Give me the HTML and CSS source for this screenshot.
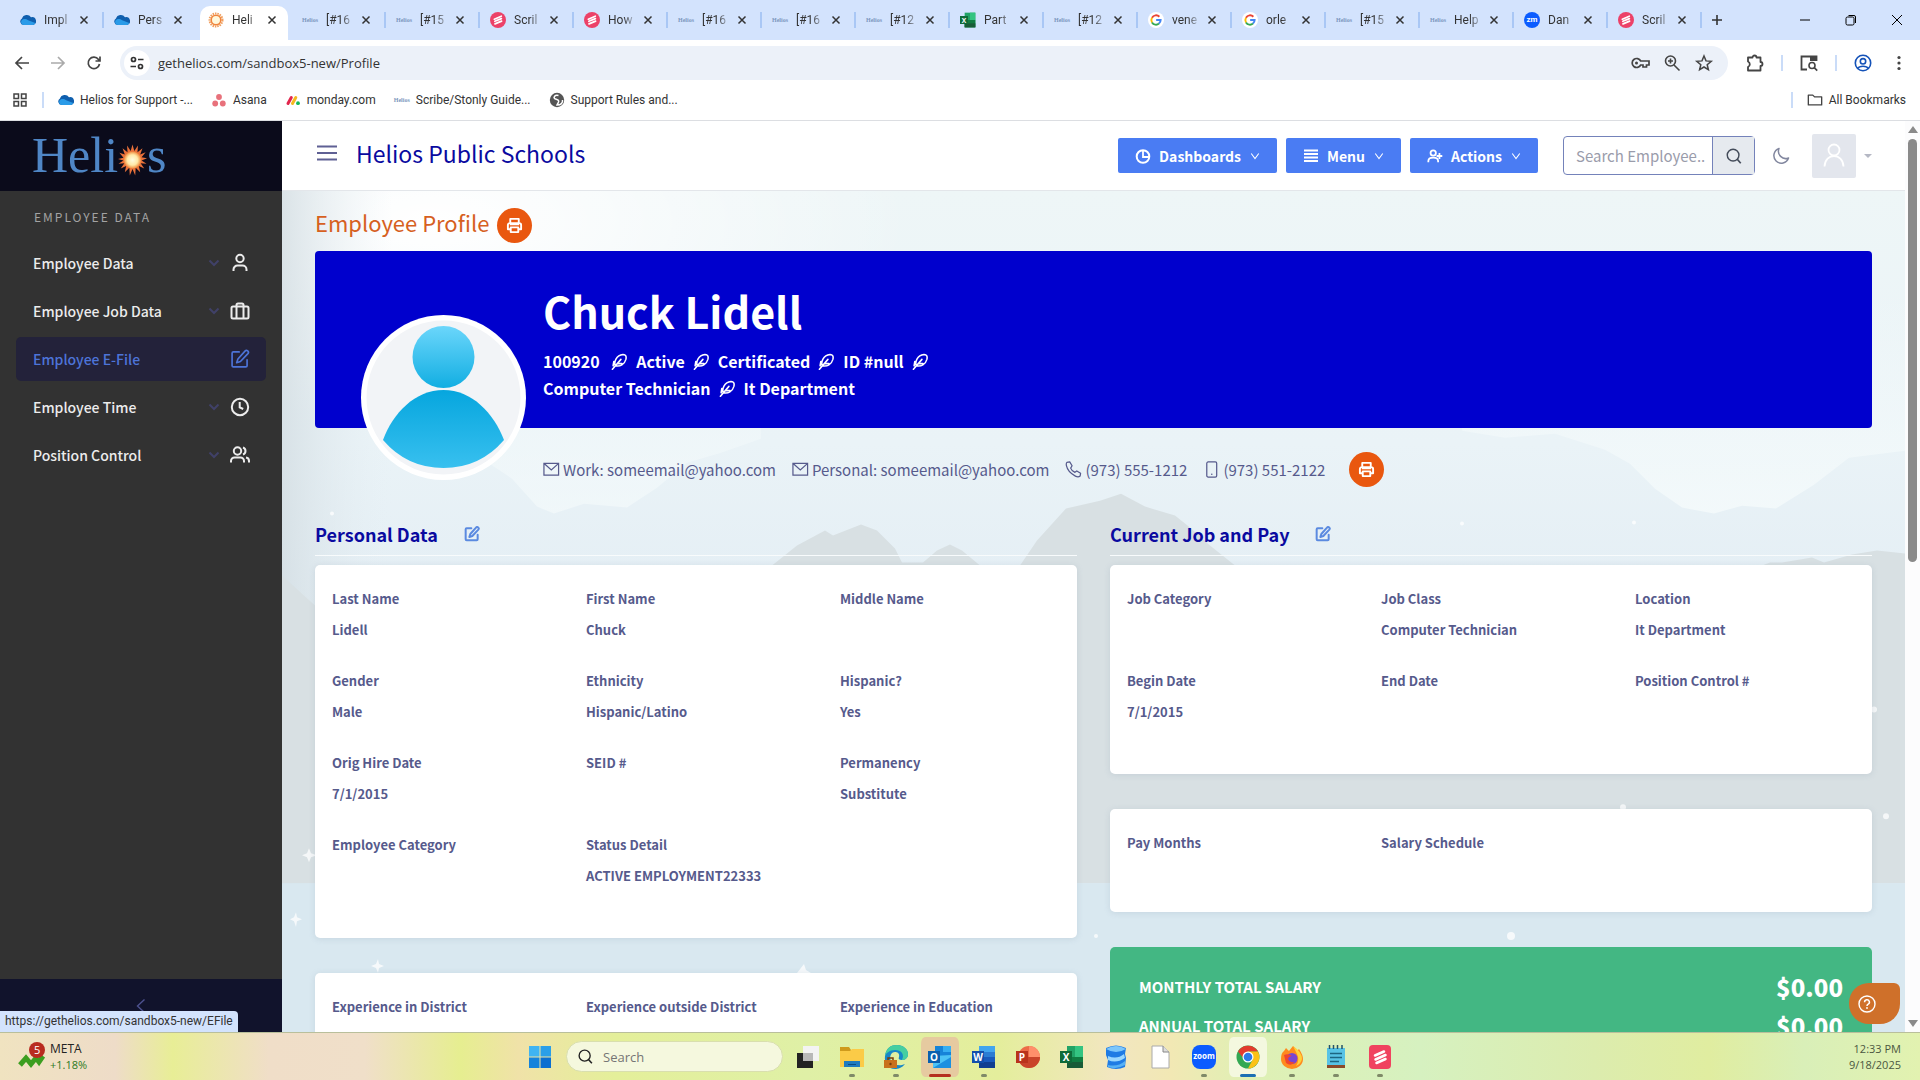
FILE: index.html
```
<!DOCTYPE html>
<html lang="en">
<head>
    <meta charset="UTF-8">
    <meta name="viewport" content="width=device-width, initial-scale=1.0">
    <title>Helios - Employee Profile</title>
    <link rel="stylesheet" href="styles.css">
</head>
<body>
    <!-- shared icons -->
    <svg class="sprite" aria-hidden="true">
        <defs>
            <linearGradient id="headGrad" x1="0" y1="0" x2="0" y2="1"><stop offset="0" stop-color="#6bd6fb"/><stop offset="1" stop-color="#12aee2"/></linearGradient>
            <linearGradient id="bodyGrad" x1="0" y1="0" x2="0" y2="1"><stop offset="0" stop-color="#06a6de"/><stop offset="1" stop-color="#38c0ef"/></linearGradient>
            <radialGradient id="sunGrad"><stop offset="0" stop-color="#fffce0"/><stop offset=".6" stop-color="#ffe9a8"/><stop offset="1" stop-color="#f08a3c"/></radialGradient>
        </defs>
        <symbol id="cloud" viewBox="0 0 16 16"><path d="M3.5 13A3.500 3.500 0 0 1 2 6.500 5 5 0 0 1 11 5.200 4 4 0 0 1 13 13z" fill="#0f5fae"/><path d="M3.600 13a3 3 0 0 1-1-5.600c2-1 4-.4 5.500.800L15.300 11A3 3 0 0 1 13 13z" fill="#2a9be8"/></symbol>
        <symbol id="sun" viewBox="0 0 16 16"><circle cx="8" cy="8" r="6.500" fill="none" stroke="#f0a060" stroke-width="2" stroke-dasharray="1.500 .9"/><circle cx="8" cy="8" r="4.800" fill="#fff8dc" stroke="#f0853c" stroke-width="1.600"/></symbol>
        <symbol id="scribe" viewBox="0 0 16 16"><circle cx="8" cy="8" r="8" fill="#ec4168"/><path d="M4.300 7.200l7-3M4.800 9.300l6.600-2.700M5 11.900l6.600-2.800" stroke="#fff" stroke-width="1.700" stroke-linecap="round"/></symbol>
        <symbol id="google" viewBox="0 0 20 20"><circle cx="10" cy="10" r="10" fill="#fff"/><g fill="none" stroke-width="2.400"><path d="M14.200 5.900A5.800 5.800 0 0 0 5 7.100" stroke="#ea4335"/><path d="M5 7.100a5.800 5.800 0 0 0 0 5.900" stroke="#fbbc05"/><path d="M5 13a5.800 5.800 0 0 0 8.700 1.500" stroke="#34a853"/><path d="M13.700 14.500A5.800 5.800 0 0 0 15.800 10.100H10.200" stroke="#4285f4"/></g></symbol>
        <symbol id="excel" viewBox="0 0 24 24"><path d="M7 1h16v22H7z" fill="#21a366"/><path d="M7 12h16v11H7z" fill="#107c41"/><path d="M15 1h8v11h-8z" fill="#33c481"/><path d="M7 17h16v6H7z" fill="#185c37"/><path d="M0 6h12v12H0z" fill="#0e6b38"/><text x="6" y="16" class="tile-letter">X</text></symbol>
        <symbol id="close" viewBox="0 0 10 10"><path d="M1.500 1.500l7 7m0-7l-7 7" stroke="currentColor" stroke-width="1.500"/></symbol>
        <symbol id="down" viewBox="0 0 12 12"><path d="M1.500 3l4.500 6 4.500-6" fill="none" stroke="currentColor" stroke-width="1.300"/></symbol>
        <symbol id="chevron" viewBox="0 0 12 12"><path d="M1.500 3.500L6 8l4.500-4.500" fill="none" stroke="currentColor" stroke-width="2"/></symbol>
        <symbol id="edit" viewBox="0 0 24 24"><g fill="none" stroke="currentColor" stroke-linecap="round" stroke-linejoin="round"><path d="M11 3.500H4A1.500 1.500 0 0 0 2.500 5v15A1.500 1.500 0 0 0 4 21.500h15a1.500 1.500 0 0 0 1.500-1.500v-7"/><path d="M18 2.500a2.100 2.100 0 0 1 3.500 3L12.500 15l-4.500 1.500L9.500 12z"/></g></symbol>
        <symbol id="printer" viewBox="0 0 18 18"><g fill="none" stroke="#fff" stroke-width="2" stroke-linejoin="round"><path d="M4.500 6V2h9v4M4.500 13H2V8.500A2 2 0 0 1 4 6.500h10a2 2 0 0 1 2 2V13h-2.500"/><path d="M5 11h8v5H5z"/></g><path d="M4 8h10" stroke="#fff" stroke-width="1.500"/></symbol>
        <symbol id="feather" viewBox="0 0 24 24"><g fill="none" stroke="currentColor" stroke-width="2.200" stroke-linecap="round" stroke-linejoin="round"><path d="M6 18C4 13 7 3 17 2c4 0 5 3 4 7C19 16 13 19.500 6 18zM2 23L14 9M9.500 15h6M4 12l-1 6"/></g></symbol>
        <symbol id="mail" viewBox="0 0 18 16"><path d="M1 1.500h15.500v12.500H1zM1.500 2l7.300 6.500L16 2" fill="none" stroke="currentColor" stroke-width="1.300"/></symbol>
        <symbol id="search" viewBox="0 0 20 20"><circle cx="9" cy="9" r="6.500" fill="none" stroke="currentColor" stroke-width="1.600"/><path d="M13.500 13.500L17.500 18" stroke="currentColor" stroke-width="1.800"/></symbol>
    </svg>

    <header class="browser">
        <div class="tab-strip">
            <div class="tab"><svg class="favicon"><use href="#cloud"/></svg><span class="tab-title">Impl</span><button class="tab-close" aria-label="Close tab"><svg><use href="#close"/></svg></button></div>
            <div class="tab no-line"><svg class="favicon"><use href="#cloud"/></svg><span class="tab-title">Pers</span><button class="tab-close" aria-label="Close tab"><svg><use href="#close"/></svg></button></div>
            <div class="tab active"><svg class="favicon"><use href="#sun"/></svg><span class="tab-title">Heli</span><button class="tab-close" aria-label="Close tab"><svg><use href="#close"/></svg></button></div>
            <div class="tab"><span class="mini-logo">Helios</span><span class="tab-title">[#16</span><button class="tab-close" aria-label="Close tab"><svg><use href="#close"/></svg></button></div>
            <div class="tab"><span class="mini-logo">Helios</span><span class="tab-title">[#15</span><button class="tab-close" aria-label="Close tab"><svg><use href="#close"/></svg></button></div>
            <div class="tab"><svg class="favicon"><use href="#scribe"/></svg><span class="tab-title">Scril</span><button class="tab-close" aria-label="Close tab"><svg><use href="#close"/></svg></button></div>
            <div class="tab"><svg class="favicon"><use href="#scribe"/></svg><span class="tab-title">How</span><button class="tab-close" aria-label="Close tab"><svg><use href="#close"/></svg></button></div>
            <div class="tab"><span class="mini-logo">Helios</span><span class="tab-title">[#16</span><button class="tab-close" aria-label="Close tab"><svg><use href="#close"/></svg></button></div>
            <div class="tab"><span class="mini-logo">Helios</span><span class="tab-title">[#16</span><button class="tab-close" aria-label="Close tab"><svg><use href="#close"/></svg></button></div>
            <div class="tab"><span class="mini-logo">Helios</span><span class="tab-title">[#12</span><button class="tab-close" aria-label="Close tab"><svg><use href="#close"/></svg></button></div>
            <div class="tab"><svg class="favicon"><use href="#excel"/></svg><span class="tab-title">Part</span><button class="tab-close" aria-label="Close tab"><svg><use href="#close"/></svg></button></div>
            <div class="tab"><span class="mini-logo">Helios</span><span class="tab-title">[#12</span><button class="tab-close" aria-label="Close tab"><svg><use href="#close"/></svg></button></div>
            <div class="tab"><svg class="favicon"><use href="#google"/></svg><span class="tab-title">vene</span><button class="tab-close" aria-label="Close tab"><svg><use href="#close"/></svg></button></div>
            <div class="tab"><svg class="favicon"><use href="#google"/></svg><span class="tab-title">orle</span><button class="tab-close" aria-label="Close tab"><svg><use href="#close"/></svg></button></div>
            <div class="tab"><span class="mini-logo">Helios</span><span class="tab-title">[#15</span><button class="tab-close" aria-label="Close tab"><svg><use href="#close"/></svg></button></div>
            <div class="tab"><span class="mini-logo">Helios</span><span class="tab-title">Help</span><button class="tab-close" aria-label="Close tab"><svg><use href="#close"/></svg></button></div>
            <div class="tab"><span class="zm">zm</span><span class="tab-title">Dan</span><button class="tab-close" aria-label="Close tab"><svg><use href="#close"/></svg></button></div>
            <div class="tab"><svg class="favicon"><use href="#scribe"/></svg><span class="tab-title">Scril</span><button class="tab-close" aria-label="Close tab"><svg><use href="#close"/></svg></button></div>
            <button class="new-tab" aria-label="New tab"><svg viewBox="0 0 12 12"><path d="M6 1v10M1 6h10" stroke="#333" stroke-width="1.600"/></svg></button>
            <div class="window-controls">
                <button aria-label="Minimize"><svg viewBox="0 0 12 12"><path d="M1 6h10" stroke="#000"/></svg></button>
                <button aria-label="Restore"><svg viewBox="0 0 12 12"><rect x="1" y="3" width="8" height="8" rx="1.500" fill="none" stroke="#000"/><path d="M3.500 1.500H9A1.500 1.500 0 0 1 10.500 3v6" fill="none" stroke="#000"/></svg></button>
                <button aria-label="Close window"><svg viewBox="0 0 12 12"><path d="M1 1l10 10M11 1L1 11" stroke="#000"/></svg></button>
            </div>
        </div>

        <div class="toolbar">
            <button class="tool" aria-label="Back"><svg viewBox="0 0 16 16"><path d="M15 8H2m6-6L2 8l6 6" fill="none" stroke="#444" stroke-width="1.700"/></svg></button>
            <button class="tool" aria-label="Forward"><svg viewBox="0 0 16 16"><path d="M1 8h13M8 2l6 6-6 6" fill="none" stroke="#aaa" stroke-width="1.700"/></svg></button>
            <button class="tool" aria-label="Reload"><svg viewBox="0 0 16 16"><path d="M13.500 9A5.700 5.700 0 1 1 12.500 4.500L14 6M14 1.500V6H9.500" fill="none" stroke="#444" stroke-width="1.700"/></svg></button>
            <div class="omnibox">
                <span class="site-info"><svg viewBox="0 0 16 16"><g fill="none" stroke="#333" stroke-width="1.700"><circle cx="4.500" cy="4.500" r="2"/><path d="M9 4.500h5.500M1.500 11.500H7"/><circle cx="11.500" cy="11.500" r="2"/></g></svg></span>
                <input class="url" type="text" aria-label="Address" value="gethelios.com/sandbox5-new/Profile">
                <button class="omni-icon" aria-label="Passwords"><svg viewBox="0 0 20 20"><path d="M10.700 8A4.500 4.500 0 1 0 10.700 12H13v2h3.500v-2H19V8z" fill="none" stroke="#444" stroke-width="1.700"/><circle cx="6.500" cy="10" r="1.500" fill="#444"/></svg></button>
                <button class="omni-icon" aria-label="Zoom"><svg viewBox="0 0 20 20"><g fill="none" stroke="#444" stroke-width="1.600"><circle cx="8.500" cy="8" r="5"/><path d="M12 12l5.500 5.500M8.500 5.500v5M6 8h5"/></g></svg></button>
                <button class="omni-icon" aria-label="Bookmark this tab"><svg viewBox="0 0 20 20"><path d="M10 3l2 4.900 5.200.4-4 3.400 1.200 5-4.400-2.700-4.400 2.700 1.200-5-4-3.400 5.200-.4z" fill="none" stroke="#444" stroke-width="1.500"/></svg></button>
            </div>
            <button class="tool ext" aria-label="Extensions"><svg viewBox="0 0 20 20"><path d="M3 4.500h4.500a2 2 0 0 1 4 0H15.500V9a2 2 0 0 1 0 4v4.500H3V14a3 3 0 0 0 0-5.500z" fill="none" stroke="#444" stroke-width="1.800" stroke-linejoin="round"/></svg></button>
            <span class="line"></span>
            <button class="tool ext" aria-label="Side panel search"><svg viewBox="0 0 20 20"><path d="M8 16.500H2.500v-13h15V8M11 5.500h6" fill="none" stroke="#444" stroke-width="1.800"/><path d="M11 4h6v4h-6z" fill="#444"/><circle cx="13" cy="12.500" r="3" fill="none" stroke="#444" stroke-width="1.600"/><path d="M15.200 14.700l3 3" stroke="#444" stroke-width="1.700"/></svg></button>
            <span class="line"></span>
            <button class="tool ext" aria-label="Profile"><svg viewBox="0 0 20 20"><g fill="none" stroke="#1452b8" stroke-width="1.600"><circle cx="10" cy="10" r="7.700"/><circle cx="10" cy="8.300" r="2.700"/><path d="M4.500 15.500c2-3 9-3 11 0"/></g></svg></button>
            <button class="tool dots" aria-label="Menu"><svg viewBox="0 0 4 16"><circle cx="2" cy="2.500" r="1.600"/><circle cx="2" cy="8" r="1.600"/><circle cx="2" cy="13.500" r="1.600"/></svg></button>
        </div>

        <nav class="bookmarks">
            <button class="apps-btn" aria-label="Apps"><svg viewBox="0 0 16 16"><path d="M2 2h4.500v4.500H2zM9.500 2H14v4.500H9.500zM2 9.500h4.500V14H2zM9.500 9.500H14V14H9.500z" fill="none" stroke="#444" stroke-width="1.500"/></svg></button>
            <span class="line"></span>
            <a href="#"><svg><use href="#cloud"/></svg>Helios for Support -...</a>
            <a href="#"><svg viewBox="0 0 16 16"><g fill="#e8717b"><circle cx="8" cy="5" r="2.900"/><circle cx="4.200" cy="11.500" r="2.900"/><circle cx="11.800" cy="11.500" r="2.900"/></g></svg>Asana</a>
            <a href="#"><svg viewBox="0 0 16 16"><path d="M3 11.500l3.300-6" stroke="#e2264d" stroke-width="3" stroke-linecap="round"/><path d="M7.500 11.500l3.300-6" stroke="#f5b91f" stroke-width="3" stroke-linecap="round"/><circle cx="13" cy="11.200" r="1.900" fill="#14b85c"/></svg>monday.com</a>
            <a href="#"><span class="mini-logo">Helios</span>Scribe/Stonly Guide...</a>
            <a href="#"><svg viewBox="0 0 16 16"><circle cx="8" cy="8" r="7.200" fill="#555"/><path d="M9.500 3.500c-4-1-5 2-4 3s3 .5 4 2-1 3-1.500 4.500c4 0 6-2 5.500-5" fill="none" stroke="#fff" stroke-width="1.500"/></svg>Support Rules and...</a>
            <span class="line all-line"></span>
            <a class="all" href="#"><svg viewBox="0 0 18 16"><path d="M1.500 2.500h5l2 2h8v9h-15z" fill="none" stroke="#444" stroke-width="1.500" stroke-linejoin="round"/></svg>All Bookmarks</a>
        </nav>
    </header>

    <div class="app">
        <aside class="sidebar">
            <div class="logo">Heli<svg viewBox="0 0 32 36"><path d="M16 1l2 7 4-6-.5 7.500L27 5l-2.500 7 6-2.500-4.500 5.500 6 1-6 2.500 5.500 3.500-6.500-.5 4 6-6-3 1.500 7-5-5-.5 8.500L16 28l-3 7-.5-8.500-5 5 1.500-7-6 3 4-6-6.500.5L6 18.500 0 17l6-1.500L1.500 10l6 2L5 5l5.500 4.500L10 2l4 6z" fill="#e9713a"/><circle cx="16" cy="18" r="9.500" fill="url(#sunGrad)"/></svg>s</div>
            <p class="side-title">EMPLOYEE DATA</p>
            <nav class="side-menu">
                <a href="#">Employee Data<svg class="chev"><use href="#chevron"/></svg><svg class="side-icon" viewBox="0 0 20 20"><circle cx="10" cy="5.500" r="3.700"/><path d="M3.500 18v-1.500a4 4 0 0 1 4-4h5a4 4 0 0 1 4 4V18"/></svg></a>
                <a href="#">Employee Job Data<svg class="chev"><use href="#chevron"/></svg><svg class="side-icon" viewBox="0 0 20 20"><rect x="1.500" y="5.500" width="17" height="12" rx="1.500"/><path d="M6.500 17V4A1.500 1.500 0 0 1 8 2.500h4A1.500 1.500 0 0 1 13.500 4v13"/></svg></a>
                <a href="#" class="current">Employee E-File<svg class="side-icon edit"><use href="#edit"/></svg></a>
                <a href="#">Employee Time<svg class="chev"><use href="#chevron"/></svg><svg class="side-icon" viewBox="0 0 20 20"><circle cx="10" cy="10" r="8.200"/><path d="M9.700 5v5.300l3.500 1.700"/></svg></a>
                <a href="#">Position Control<svg class="chev"><use href="#chevron"/></svg><svg class="side-icon" viewBox="0 0 20 20"><circle cx="7.500" cy="6" r="3.700"/><path d="M1 17.500V16a3.500 3.500 0 0 1 3.500-3.500h6A3.500 3.500 0 0 1 14 16v1.500M13 2.500a3.700 3.700 0 0 1 0 7M16 12.500a3.500 3.500 0 0 1 3 3.500v1.500"/></svg></a>
            </nav>
            <button class="side-foot" aria-label="Collapse sidebar"><svg viewBox="0 0 12 16"><path d="M9.500 1.500l-7 6.500 7 6.500" fill="none" stroke="#4e5290" stroke-width="1.400"/></svg></button>
            <span class="status-bubble">https://gethelios.com/sandbox5-new/EFile</span>
        </aside>

        <main class="main">
            <svg class="scenery" viewBox="0 0 1623 842" preserveAspectRatio="none" aria-hidden="true">
                <defs>
                    <linearGradient id="sky" x1="0" y1="0" x2="0" y2="1"><stop offset="0" stop-color="#eef6f7"/><stop offset=".3" stop-color="#eaf3f7"/><stop offset=".45" stop-color="#e5eff5"/><stop offset="1" stop-color="#dce8ef"/></linearGradient>
                    <linearGradient id="leftShade"><stop offset="0" stop-color="#d3dde2" stop-opacity=".8"/><stop offset="1" stop-color="#e6eff4" stop-opacity="0"/></linearGradient>
                    <linearGradient id="cloudFade" x1="0" y1="0" x2="0" y2="1"><stop offset="0" stop-color="#f4fafb" stop-opacity="0"/><stop offset="1" stop-color="#f4fafb"/></linearGradient>
                    <radialGradient id="glow"><stop offset="0" stop-color="#fff"/><stop offset="1" stop-color="#fff" stop-opacity="0"/></radialGradient>
                </defs>
                <rect width="1623" height="842" fill="url(#sky)"/>
                <ellipse cx="150" cy="30" rx="480" ry="200" fill="url(#glow)"/>
                <path d="M200 100v168l30 20 25 28 17 7 30-10 43 4 30-20 30-25 34-10 40-14V100z" fill="url(#cloudFade)" opacity=".7"/>
                <path d="M1180 100v140l43 7 50-4 50 16 25 14 25 25 27 19 32 6 28-8 34 3 38-24 35-27 56-7V100z" fill="url(#cloudFade)" opacity=".9"/>
                <rect width="110" height="842" fill="url(#leftShade)"/>
                <path d="M0 385L33 415V440H460L490 375 515 355 543 340 551 345 579 334 595 340 613 358 620 372H641L655 360 668 354 680 360 698 375H738L755 350 784 318 818 310 839 303 863 316 893 325 908 337 928 355 953 375H1480L1488 372H1500L1530 367 1542 372 1570 364 1595 360 1623 363V693H0z" fill="#d8e0e3"/>
                <path d="M0 693h1623v149H0z" fill="#d9e8f0"/>
                <g fill="#fff" opacity=".75">
                    <circle cx="50" cy="323" r="2"/><circle cx="1180" cy="333" r="2"/><circle cx="1352" cy="332" r="2"/><circle cx="1341" cy="617" r="3"/><circle cx="1604" cy="626" r="3"/><circle cx="1229" cy="746" r="4"/><circle cx="1592" cy="519" r="3"/><circle cx="814" cy="746" r="2"/>
                    <path d="M96 769l1 5 5 2-5 2-1 5-2-5-5-2 5-2zM14 722l1 5 5 2-5 2-1 6-2-6-4-2 4-2zM27 658l2 5 6 2-6 2-2 5-2-5-5-2 5-2zM522 774l2 6 5 3H515z"/>
                </g>
            </svg>

            <div class="topbar">
                <button class="burger" aria-label="Toggle menu"><svg viewBox="0 0 22 16"><path d="M1 1.500h20M1 8h20M1 14.500h20" stroke="#5f6094" stroke-width="2"/></svg></button>
                <h1>Helios Public Schools</h1>
                <div class="actions">
                    <button class="btn"><svg class="btn-icon" viewBox="0 0 16 16"><circle cx="8" cy="8.500" r="6.300" fill="none" stroke="#fff" stroke-width="2"/><path d="M8 2v7h6" fill="none" stroke="#fff" stroke-width="1.800"/></svg>Dashboards<svg class="caret"><use href="#down"/></svg></button>
                    <button class="btn"><svg class="btn-icon" viewBox="0 0 16 16"><path d="M1 2.500h14M1 6h14M1 9.500h14M1 13h14" stroke="#fff" stroke-width="2"/></svg>Menu<svg class="caret"><use href="#down"/></svg></button>
                    <button class="btn"><svg class="btn-icon" viewBox="0 0 18 16"><g fill="none" stroke="#fff" stroke-width="2"><circle cx="7" cy="4.700" r="3"/><path d="M1.500 15v-1.500c0-5 11-5 11 0V15M14 4.500v7M10.800 8h6.400"/></g></svg>Actions<svg class="caret"><use href="#down"/></svg></button>
                </div>
                <form class="search">
                    <input type="text" placeholder="Search Employee.." aria-label="Search Employee">
                    <button type="button" aria-label="Search"><svg><use href="#search"/></svg></button>
                </form>
                <button class="moon" aria-label="Dark mode"><svg viewBox="0 0 18 18"><path d="M7 1.500a7.500 7.500 0 1 0 9.500 9.500A7.300 7.300 0 0 1 7 1.500z" fill="none" stroke="#82879f" stroke-width="1.500" stroke-linejoin="round"/></svg></button>
                <button class="user" aria-label="User menu"><span class="user-pic"><svg viewBox="0 0 24 24"><g fill="none" stroke="#fff" stroke-width="1.800"><circle cx="12" cy="7" r="5.500"/><path d="M2.500 23.500C3 9.500 21 9.500 21.500 23.500"/></g></svg></span><span class="user-caret"></span></button>
            </div>

            <div class="content">
                <div class="page-title">
                    <h2>Employee Profile</h2>
                    <button class="print" aria-label="Print"><svg><use href="#printer"/></svg></button>
                </div>

                <section class="banner">
                    <svg class="avatar" viewBox="0 0 165 165" role="img" aria-label="Employee photo">
                        <circle cx="82.500" cy="82.500" r="82.500" fill="#fff"/>
                        <circle cx="82.500" cy="82.500" r="77" fill="#f2f4f7"/>
                        <circle cx="82.500" cy="42" r="31" fill="url(#headGrad)"/>
                        <path d="M22 125C32 98 54 75 82.500 75s50 23 60.500 50q-24 28-60.500 28T22 125z" fill="url(#bodyGrad)"/>
                    </svg>
                    <div class="banner-text">
                        <h3>Chuck Lidell</h3>
                        <p><span>100920&nbsp;</span><svg><use href="#feather"/></svg><span>Active</span><svg><use href="#feather"/></svg><span>Certificated</span><svg><use href="#feather"/></svg><span>ID #null</span><svg><use href="#feather"/></svg></p>
                        <p><span>Computer Technician</span><svg><use href="#feather"/></svg><span>It Department</span></p>
                    </div>
                </section>

                <div class="contact">
                    <span><svg><use href="#mail"/></svg>Work: someemail@yahoo.com</span>
                    <span><svg><use href="#mail"/></svg>Personal: someemail@yahoo.com</span>
                    <span><svg viewBox="0 0 18 18"><path d="M2 1.500l3-.5 2.500 4L6 7.500q1 3 4.500 4.500l2-1.500 4 2.500-.5 3q-2 1.500-5 0Q3 12 1.500 5 1 2.500 2 1.500z" fill="none" stroke="currentColor" stroke-width="1.300" stroke-linejoin="round"/></svg>(973) 555-1212</span>
                    <span><svg viewBox="0 0 18 18"><rect x="4" y="1" width="10.500" height="16" rx="1.500" fill="none" stroke="currentColor" stroke-width="1.300"/><circle cx="9.300" cy="14" r=".8" fill="currentColor"/></svg>(973) 551-2122</span>
                    <button class="print" aria-label="Print contact"><svg><use href="#printer"/></svg></button>
                </div>

                <div class="columns">
                    <div class="column">
                        <div class="section-head"><h4>Personal Data</h4><a href="#" aria-label="Edit personal data"><svg><use href="#edit"/></svg></a></div>
                        <div class="card">
                            <div class="field"><span>Last Name</span><p>Lidell</p></div>
                            <div class="field"><span>First Name</span><p>Chuck</p></div>
                            <div class="field"><span>Middle Name</span></div>
                            <div class="field"><span>Gender</span><p>Male</p></div>
                            <div class="field"><span>Ethnicity</span><p>Hispanic/Latino</p></div>
                            <div class="field"><span>Hispanic?</span><p>Yes</p></div>
                            <div class="field"><span>Orig Hire Date</span><p>7/1/2015</p></div>
                            <div class="field"><span>SEID #</span></div>
                            <div class="field"><span>Permanency</span><p>Substitute</p></div>
                            <div class="field"><span>Employee Category</span></div>
                            <div class="field"><span>Status Detail</span><p>ACTIVE EMPLOYMENT22333</p></div>
                        </div>
                        <div class="card">
                            <div class="field"><span>Experience in District</span></div>
                            <div class="field"><span>Experience outside District</span></div>
                            <div class="field"><span>Experience in Education</span></div>
                        </div>
                    </div>
                    <div class="column">
                        <div class="section-head"><h4>Current Job and Pay</h4><a href="#" aria-label="Edit current job"><svg><use href="#edit"/></svg></a></div>
                        <div class="card">
                            <div class="field"><span>Job Category</span></div>
                            <div class="field"><span>Job Class</span><p>Computer Technician</p></div>
                            <div class="field"><span>Location</span><p>It Department</p></div>
                            <div class="field"><span>Begin Date</span><p>7/1/2015</p></div>
                            <div class="field"><span>End Date</span></div>
                            <div class="field"><span>Position Control #</span></div>
                        </div>
                        <div class="card card-short">
                            <div class="field"><span>Pay Months</span></div>
                            <div class="field"><span>Salary Schedule</span></div>
                        </div>
                        <div class="salary">
                            <div><span>MONTHLY TOTAL SALARY</span><strong>$0.00</strong></div>
                            <div><span>ANNUAL TOTAL SALARY</span><strong>$0.00</strong></div>
                        </div>
                    </div>
                </div>
            </div>
            <button class="help" aria-label="Help"><svg viewBox="0 0 18 18"><circle cx="9" cy="9" r="8" fill="none" stroke="#fff" stroke-width="1.400"/><path d="M6.600 7.200a2.400 2.400 0 1 1 3.600 2C9.300 9.700 9 10 9 11" fill="none" stroke="#fff" stroke-width="1.500"/><circle cx="9" cy="13" r=".9" fill="#fff"/></svg></button>
        </main>

        <div class="scrollbar"><span class="up"></span><span class="thumb"></span><span class="dn"></span></div>
    </div>

    <footer class="taskbar">
        <button class="widget">
            <svg viewBox="0 0 32 34"><path d="M2 25l6-7 5 6 5-6 3 4 4-6" fill="none" stroke="#3c9e20" stroke-width="5"/><circle cx="19" cy="10" r="8" fill="#b92b20"/></svg>
            <span class="badge">5</span>
            <span class="stock">META<br><em>+1.18%</em></span>
        </button>
        <div class="task-center">
            <button class="app-btn" aria-label="Start"><svg viewBox="0 0 24 24"><path d="M1 1h10.500v10.500H1z" fill="#3fb4f2"/><path d="M12.500 1H23v10.500H12.500z" fill="#2a9fe8"/><path d="M1 12.500h10.500V23H1z" fill="#1583dc"/><path d="M12.500 12.500H23V23H12.500z" fill="#0b6fd0"/></svg></button>
            <label class="task-search"><svg><use href="#search"/></svg><input type="text" placeholder="Search" aria-label="Search Windows"></label>
            <button class="app-btn" aria-label="Task view"><svg viewBox="0 0 24 24"><path d="M7 1h16v15H7z" fill="#f3f3f3"/><path d="M1 8h16v15H1z" fill="#222"/><path d="M7 8h10v8H7z" fill="#b8b8b8"/></svg></button>
            <button class="app-btn run" aria-label="File Explorer"><svg viewBox="0 0 24 24"><path d="M0 2h9l2 3h12v16H0z" fill="#cf9a1c"/><path d="M0 6h10l2-2h12v18H0z" fill="#fbcb47"/><path d="M4 16h16v6H4z" fill="#1f7bbf"/><path d="M8 19h8v1H8z" fill="#0c4d85"/></svg></button>
            <button class="app-btn run" aria-label="Edge"><svg viewBox="0 0 24 24"><path d="M1 11C2 3 7 0 13 0c6 0 11 4 11 9 0 4-3 6-6 6s-4-1-3-3c1-4-2-5-4-5-4 0-6 5-4 9 2 3 7 5 11 4l3-1c-3 4-7 5-10 5C4 24 0 18 1 11z" fill="#1787c8"/><path d="M1 11C2 3 7 0 13 0c6 0 11 4 11 9 0 4-3 6-6 6 3-6-1-10-7-10-5 0-9 3-10 6z" fill="#46cfa0"/><path d="M0 15h13v8H0z" fill="#c9711c"/><path d="M4 15v-2h5v2" fill="none" stroke="#7a3d0c" stroke-width="1.500"/><circle cx="6.500" cy="19" r="1.200" fill="#7a3d0c"/></svg></button>
            <button class="app-btn run outlook" aria-label="Outlook"><svg viewBox="0 0 24 24"><path d="M7 1h16v12H7z" fill="#1683d8"/><path d="M15 1h8v6h-8z" fill="#36aef2"/><path d="M5 11l18-1v13H5z" fill="#4cc3f5"/><path d="M5 23l18-11v11z" fill="#1c90e0"/><path d="M0 6h12v12H0z" fill="#0a5fae"/><text x="6" y="16" class="tile-letter">O</text></svg></button>
            <button class="app-btn run" aria-label="Word"><svg viewBox="0 0 24 24"><path d="M7 1h16v6H7z" fill="#41a5ee"/><path d="M7 7h16v6H7z" fill="#2b7cd3"/><path d="M7 12h16v6H7z" fill="#185abd"/><path d="M7 17h16v6H7z" fill="#103f91"/><path d="M0 6h12v12H0z" fill="#124fab"/><text x="6" y="16" class="tile-letter">W</text></svg></button>
            <button class="app-btn" aria-label="PowerPoint"><svg viewBox="0 0 24 24"><circle cx="13" cy="12" r="11" fill="#ed6c47"/><path d="M13 1a11 11 0 0 1 11 11H13z" fill="#ff8f6b"/><path d="M2 12h22a11 11 0 0 1-22 0z" fill="#c9442a"/><path d="M0 6h12v12H0z" fill="#b9331c"/><text x="6" y="16" class="tile-letter">P</text></svg></button>
            <button class="app-btn" aria-label="Excel"><svg><use href="#excel"/></svg></button>
            <button class="app-btn" aria-label="SQL"><svg viewBox="0 0 24 24"><path d="M2 3q10-5 20 0l-1 6 1 4-1 9q-9 4-18 0l1-7-2-5z" fill="#1f7be4"/><path d="M2 4q10-6 20 0-10 6-20 0z" fill="#7cc6fb"/><path d="M4 11q9 4 16-2l1 4q-9 6-17 2z" fill="#9ad7ff"/><path d="M4 20q10 2 17-4v4q-9 5-17 2z" fill="#57b1f5"/></svg></button>
            <button class="app-btn" aria-label="Document"><svg viewBox="0 0 24 24"><path d="M4 1h11l6 6v16H4z" fill="#fff" stroke="#aaa"/><path d="M15 1v6h6" fill="#ddd" stroke="#888"/></svg></button>
            <button class="app-btn run" aria-label="Zoom"><span class="zoom-app">zoom</span></button>
            <button class="app-btn run chrome" aria-label="Chrome"><svg viewBox="0 0 24 24"><circle cx="12" cy="12" r="11.500" fill="#34a853"/><path d="M2 6.500A11.500 11.500 0 0 1 22 6.500H12L8 14z" fill="#e33b2e"/><path d="M22 6.500a11.500 11.500 0 0 1-10 17l5-9.500-5-7.500z" fill="#fbc116"/><circle cx="12" cy="12" r="5.500" fill="#fff"/><circle cx="12" cy="12" r="4.300" fill="#2d7ae8"/></svg></button>
            <button class="app-btn run" aria-label="Firefox"><svg viewBox="0 0 24 24"><path d="M6 3l3 3 4-5q3 2 4 5l2-2q4 6 4 10a11 10 0 0 1-22 0Q1 8 4 6z" fill="#ff8a1e"/><path d="M13 1q9 6 9 13-1 5-6 7 4-6 1-12z" fill="#ffd03a"/><circle cx="12" cy="13.500" r="5.500" fill="#7a45d0"/><path d="M4 10q4-2 8 1-3 0-4 3 2 4 7 3-4 5-9 1z" fill="#f0462e"/></svg></button>
            <button class="app-btn run" aria-label="Notepad"><svg viewBox="0 0 24 24"><path d="M3 3h18v17H3z" fill="#57c3e6"/><path d="M3 20h18v3H3z" fill="#8b4a2b"/><path d="M5.500 0v4M9.500 0v4M13.500 0v4M18 0v4" stroke="#24536a" stroke-width="1.500"/><path d="M6 8.500h12M6 12.500h12M6 16.500h9" stroke="#1c6582" stroke-width="1.600"/></svg></button>
            <button class="app-btn run" aria-label="Scribe"><svg viewBox="0 0 24 24"><rect x="1" y="0" width="22" height="24" rx="4" fill="#f0435f"/><path d="M7 10.500l9-4M7.500 14.500l10-4.500M8.500 18l9-4" stroke="#fff" stroke-width="2.500" stroke-linecap="round"/></svg></button>
        </div>
        <div class="clock">12:33 PM<br>9/18/2025</div>
    </footer>
</body>
</html>
```

FILE: styles.css
```
* {
    box-sizing: border-box;
}
body {
    margin: 0;
    height: 100vh;
    display: flex;
    flex-direction: column;
    overflow: hidden;
    font-family: "Noto Sans CJK SC", "Noto Sans", sans-serif;
    color: #565a8c;
}
h1, h2, h3, h4, p {
    margin: 0;
}
button {
    border: 0;
    padding: 0;
    background: none;
    font-family: inherit;
    color: inherit;
    display: flex;
    align-items: center;
    justify-content: center;
}
input {
    font-family: inherit;
    border: 0;
    outline: 0;
    background: none;
    min-width: 0;
    padding: 0;
}
a {
    color: inherit;
    text-decoration: none;
}
svg {
    display: block;
    flex: none;
}
.sprite {
    position: absolute;
    width: 0;
    height: 0;
}
.tile-letter {
    font: bold 10px "Open Sans", sans-serif;
    text-anchor: middle;
    fill: #fff;
}

/* browser chrome */
.browser, .taskbar, .status-bubble {
    font-family: "Open Sans", "Noto Sans", sans-serif;
    font-size: 12px;
    color: #333;
}
.tab-strip, .bookmarks, .status-bubble {
    font-family: Roboto, "Open Sans", sans-serif;
}
.browser {
    background: #fff;
    border-bottom: 1px solid #dcdee2;
}
.tab-strip {
    display: flex;
    height: 40px;
    padding-left: 10px;
    background: #d3e3fd;
}
.tab {
    position: relative;
    display: flex;
    align-items: center;
    width: 94px;
    padding-left: 10px;
}
.tab::after {
    content: "";
    position: absolute;
    right: 0;
    width: 2px;
    height: 16px;
    background: #a9c7f5;
}
.tab.active::before {
    content: "";
    position: absolute;
    left: 2px;
    right: 4px;
    top: 6px;
    bottom: 0;
    background: #fff;
    border-radius: 10px 10px 0 0;
}
.tab.active > * {
    position: relative;
}
.tab.active::after, .tab.no-line::after {
    display: none;
}
.favicon {
    width: 16px;
    height: 16px;
}
.mini-logo {
    width: 16px;
    font: bold 6px "Liberation Serif", serif;
    color: #7b97bd;
}
.zm {
    width: 16px;
    height: 16px;
    border-radius: 8px;
    background: #0b5cff;
    color: #fff;
    font-size: 8px;
    line-height: 15px;
    font-weight: bold;
    text-align: center;
}
.tab-title {
    width: 26px;
    margin-left: 8px;
    white-space: nowrap;
    mask-image: linear-gradient(90deg, #000 60%, rgba(0, 0, 0, 0.2));
}
.tab-close {
    width: 16px;
    height: 16px;
    margin-left: 6px;
}
.tab-close svg {
    width: 10px;
    height: 10px;
}
.new-tab {
    width: 30px;
}
.new-tab svg, .window-controls svg {
    width: 12px;
    height: 12px;
}
.window-controls {
    display: flex;
    margin-left: auto;
}
.window-controls button {
    width: 46px;
}
.toolbar {
    display: flex;
    align-items: center;
    height: 46px;
    padding: 0 12px 0 4px;
}
.tool {
    width: 36px;
    height: 34px;
}
.tool svg {
    width: 16px;
    height: 16px;
}
.omnibox {
    flex: 1;
    display: flex;
    align-items: center;
    height: 34px;
    margin-left: 8px;
    padding: 0 8px 0 4px;
    border-radius: 17px;
    background: #ecf1f9;
}
.site-info {
    width: 26px;
    height: 26px;
    padding: 5px;
    border-radius: 13px;
    background: #fff;
}
.url {
    flex: 1;
    margin-left: 8px;
    font-size: 13px;
    color: #333;
}
.omni-icon {
    width: 32px;
}
.omni-icon svg, .ext svg {
    width: 20px;
    height: 20px;
}
.ext {
    width: 54px;
}
.line {
    width: 2px;
    height: 16px;
    margin: 0 -1px;
    background: #cadcf8;
}
.dots {
    width: 18px;
}
.dots svg {
    fill: #444;
}
.bookmarks {
    display: flex;
    align-items: center;
    height: 34px;
    padding: 0 14px 6px 12px;
}
.apps-btn svg {
    width: 16px;
    height: 16px;
}
.bookmarks .line {
    margin: 0 14px;
}
.bookmarks a {
    display: flex;
    align-items: center;
    gap: 6px;
    margin-right: 18px;
}
.bookmarks a svg {
    width: 16px;
    height: 16px;
}
.bookmarks .all-line {
    margin-left: auto;
}
.bookmarks .all {
    margin-right: 0;
}

/* app */
.app {
    flex: 1;
    display: flex;
    min-height: 0;
}
.sidebar {
    position: relative;
    display: flex;
    flex-direction: column;
    width: 282px;
    background: #323232;
}
.logo {
    display: flex;
    align-items: center;
    height: 70px;
    padding: 0 32px 2px;
    background: #0b0b1b;
    font: 50px "Liberation Serif", serif;
    color: #4f86c6;
}
.logo svg {
    width: 29px;
    height: 34px;
    margin-top: 10px;
}
.side-title {
    margin: 16px 34px 14px;
    font-size: 12px;
    line-height: 20px;
    letter-spacing: 2px;
    color: #a3a3a3;
}
.side-menu {
    display: flex;
    flex-direction: column;
    gap: 4px;
    padding: 0 16px;
}
.side-menu a {
    display: flex;
    align-items: center;
    height: 44px;
    padding: 0 16px 0 17px;
    border-radius: 5px;
    font-size: 14px;
    font-weight: 500;
    color: #ececec;
}
.side-menu .current {
    background: #23223a;
    color: #4d74d8;
}
.chev {
    width: 12px;
    height: 12px;
    margin-left: auto;
    color: #404168;
}
.side-icon {
    width: 20px;
    height: 20px;
    margin-left: 10px;
    fill: none;
    stroke: currentColor;
    stroke-width: 2;
}
.side-icon.edit {
    margin-left: auto;
}
.side-foot {
    height: 53px;
    margin-top: auto;
    background: #11132c;
}
.side-foot svg {
    width: 12px;
    height: 16px;
}
.status-bubble {
    position: absolute;
    left: 0;
    bottom: 0;
    padding: 0 5px;
    line-height: 21px;
    border-radius: 0 4px 0 0;
    background: #d3e3fd;
    white-space: nowrap;
}
.main {
    flex: 1;
    position: relative;
    min-width: 0;
    overflow: hidden;
}
.scenery {
    position: absolute;
    left: 0;
    top: 70px;
    width: 100%;
    height: calc(100% - 70px);
}
.topbar, .content {
    position: relative;
}
.topbar {
    display: flex;
    align-items: center;
    height: 70px;
    padding: 0 33px 0 34px;
    background: #fff;
    border-bottom: 1px solid #e3e6ea;
}
.burger, .topbar h1 {
    margin-bottom: 6px;
}
.burger svg {
    width: 22px;
    height: 16px;
}
.topbar h1 {
    margin-left: 18px;
    font-size: 23px;
    line-height: 30px;
    font-weight: 400;
    color: #0a0aa0;
}
.actions {
    display: flex;
    gap: 9px;
    margin-left: auto;
}
.btn {
    height: 35px;
    padding: 0 17px;
    border-radius: 2px;
    background: #4a7cf3;
    color: #fff;
    font-size: 14px;
    font-weight: 700;
}
.btn-icon {
    width: 16px;
    height: 16px;
    margin-right: 8px;
}
.caret {
    width: 10px;
    height: 10px;
    margin-left: 9px;
}
.search {
    display: flex;
    width: 192px;
    height: 39px;
    margin-left: 25px;
    border: 1px solid #7482ba;
    border-radius: 4px;
    background: #fff;
}
.search input {
    flex: 1;
    padding-left: 12px;
    font-size: 15px;
}
.search input::placeholder {
    color: #9a9cab;
}
.search button {
    width: 42px;
    border-left: 1px solid #7482ba;
    background: #e6eaef;
    color: #444c5a;
}
.search svg {
    width: 18px;
    height: 18px;
}
.moon {
    margin-left: 17px;
}
.moon svg {
    width: 18px;
    height: 18px;
}
.user {
    gap: 8px;
    margin-left: 22px;
}
.user-pic {
    width: 44px;
    height: 44px;
    padding: 9px 10px;
    border-radius: 2px;
    background: #e3e6ed;
}
.user-caret {
    border: 4px solid transparent;
    border-top-color: #b5b8c4;
    border-bottom: 0;
}
.content {
    padding: 0 33px;
}
.page-title {
    display: flex;
    align-items: center;
    gap: 8px;
    height: 60px;
    padding-top: 8px;
}
.page-title h2 {
    margin-bottom: 6px;
    font-size: 22px;
    font-weight: 400;
    line-height: 30px;
    color: #d6601f;
}
.print {
    width: 35px;
    height: 35px;
    border-radius: 50%;
    background: #e9570f;
}
.print svg {
    width: 17px;
    height: 17px;
}
.banner {
    position: relative;
    height: 177px;
    padding: 29px 0 0 228px;
    border-radius: 4px;
    background: #0000cd;
    color: #fff;
}
.avatar {
    position: absolute;
    left: 46px;
    top: 64px;
    width: 165px;
    height: 165px;
}
.banner h3 {
    margin-bottom: 8px;
    font-size: 43px;
    line-height: 60px;
}
.banner p {
    display: flex;
    align-items: center;
    gap: 8px;
    font-size: 16px;
    line-height: 27px;
    font-weight: 700;
}
.banner p svg {
    width: 17px;
    height: 17px;
}
.contact {
    display: flex;
    align-items: center;
    gap: 16px;
    margin: 24px 0 0 228px;
    font-size: 15px;
    line-height: 35px;
}
.contact span {
    display: flex;
    align-items: center;
    gap: 3px;
}
.contact span svg {
    width: 17px;
    height: 17px;
}
.contact .print {
    margin-left: 8px;
}
.columns {
    display: grid;
    grid-template-columns: 1fr 1fr;
    gap: 33px;
    margin-top: 26px;
}
.section-head {
    display: flex;
    align-items: center;
    gap: 26px;
    height: 43px;
    margin-bottom: 9px;
    border-bottom: 1px solid #f8fbfc;
}
.section-head h4 {
    font-size: 18px;
    font-weight: 700;
    line-height: 30px;
    color: #0a0aa0;
}
.section-head svg {
    width: 16px;
    height: 16px;
    color: #5b8ae0;
    stroke-width: 3;
}
.card {
    display: grid;
    grid-template-columns: repeat(3, 1fr);
    margin-bottom: 35px;
    padding: 18px 0 27px;
    border-radius: 5px;
    background: #fff;
    box-shadow: 0 1px 6px rgba(120, 140, 160, 0.2);
}
.field {
    min-height: 82px;
    padding-left: 17px;
    font-size: 13px;
    line-height: 31px;
    font-weight: 700;
}
.card-short .field {
    min-height: 58px;
}
.salary {
    padding: 20px 29px;
    border-radius: 5px;
    background: #43b783;
    color: #fff;
}
.salary div {
    display: flex;
    align-items: center;
    justify-content: space-between;
    height: 39px;
    font-size: 15px;
    font-weight: 700;
}
.salary strong {
    font-size: 24px;
}
.help {
    position: absolute;
    right: 5px;
    bottom: 8px;
    width: 51px;
    height: 41px;
    padding-right: 16px;
    border-radius: 20px 6px 20px 20px;
    background: #cf702a;
}
.help svg {
    width: 18px;
    height: 18px;
}
.scrollbar {
    display: flex;
    flex-direction: column;
    align-items: center;
    width: 15px;
    padding: 5px 0;
    background: #fcfcfd;
}
.scrollbar .up, .scrollbar .dn {
    border: 5px solid transparent;
}
.scrollbar .up {
    border-top: 0;
    border-bottom: 7px solid #8a8a8a;
}
.scrollbar .dn {
    margin-top: auto;
    border-bottom: 0;
    border-top: 7px solid #8a8a8a;
}
.thumb {
    width: 9px;
    height: 47%;
    margin-top: 6px;
    border-radius: 5px;
    background: #8a8a8a;
}

/* windows taskbar */
.taskbar {
    display: grid;
    grid-template-columns: 1fr auto 1fr;
    align-items: center;
    height: 48px;
    border-top: 1px solid #b9bf9b;
    background: linear-gradient(90deg, #f0e3c0 0, #eedcc8 6%, #e8ee96 9%, #f0dec8 14%, #f0dfc9 19%, #e6ee90 24%, #f0e2a8 27%, #e4ef9a 32%, #dff0a6 42%, #e4ee9c 52%, #f2e6c0 58%, #f2e8b4 61%, #dff0b4 65%, #d6f1c0 74%, #dcecae 83%, #e0eda0 89%, #d9efb8 94%, #e2f2b0 100%);
}
.widget {
    position: relative;
    justify-self: start;
    margin-left: 18px;
}
.widget svg {
    width: 32px;
    height: 34px;
}
.badge {
    position: absolute;
    left: 16px;
    top: 2px;
    color: #fff;
    font-size: 11px;
    line-height: 16px;
}
.stock {
    font-size: 12px;
    line-height: 16px;
    text-align: left;
    color: #222;
}
.stock em {
    font-style: normal;
    font-size: 11px;
    color: #2c7a1e;
}
.task-center {
    display: flex;
    align-items: center;
}
.app-btn {
    position: relative;
    width: 44px;
    height: 40px;
}
.app-btn svg {
    width: 24px;
    height: 24px;
}
.app-btn.run::after {
    content: "";
    position: absolute;
    bottom: 0;
    width: 6px;
    height: 3px;
    border-radius: 2px;
    background: #7f8a68;
}
.app-btn.outlook::after {
    width: 22px;
    background: #b5301f;
}
.app-btn.chrome::after {
    width: 16px;
    background: #1b6fb3;
}
.app-btn.outlook, .app-btn.chrome {
    border-left: 3px solid transparent;
    border-right: 3px solid transparent;
    background: #e6caa0 padding-box;
    border-radius: 7px;
}
.app-btn.chrome {
    background: #f4f8df padding-box;
}
.zoom-app {
    width: 24px;
    height: 24px;
    border-radius: 8px;
    background: #0b5cff;
    color: #fff;
    font-size: 8px;
    font-weight: bold;
    line-height: 22px;
    text-align: center;
}
.task-search {
    display: flex;
    align-items: center;
    gap: 9px;
    width: 217px;
    height: 31px;
    margin: 0 3px 0 4px;
    padding: 0 10px;
    border: 1px solid #d9dfae;
    border-radius: 16px;
    background: #f5f8de;
    color: #222;
}
.task-search svg {
    width: 17px;
    height: 17px;
}
.task-search input {
    flex: 1;
    font-size: 13px;
}
.clock {
    justify-self: end;
    margin-right: 19px;
    font-size: 11px;
    line-height: 16px;
    text-align: right;
    color: #4b5740;
}
```
